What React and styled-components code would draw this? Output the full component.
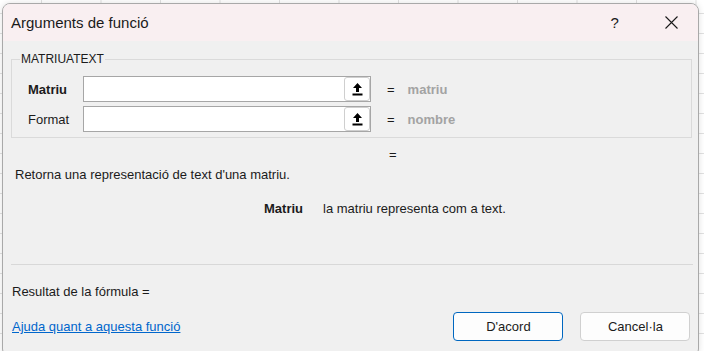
import React from "react";
import styled, { createGlobalStyle } from "styled-components";

const GlobalStyle = createGlobalStyle`
  html, body {
    margin: 0;
    width: 704px;
    height: 351px;
    overflow: hidden;
  }
  body {
    background-color: #ffffff;
    background-image:
      linear-gradient(to right, #e1e1e1 1px, transparent 1px),
      linear-gradient(to bottom, #e1e1e1 1px, transparent 1px);
    background-size: 59.5px 20px, 59.5px 20px;
    background-position: 41px 0, 0 13px;
    font-family: "Segoe UI", "Liberation Sans", Arial, sans-serif;
    color: #1b1b1b;
  }
`;

const Dialog = styled.div`
  box-sizing: border-box;
  margin: 3px 0 0 2px;
  width: 697px;
  height: 354px;
  border: 1px solid #a9a9a9;
  border-radius: 8px;
  overflow: hidden;
  background: #f0f0f0;
  display: flex;
  flex-direction: column;
  box-shadow: 0 0 6px rgba(0, 0, 0, 0.12);
`;

const TitleBar = styled.div`
  height: 37px;
  flex: none;
  display: flex;
  align-items: center;
  padding-left: 8px;
  background: #f9eff1;
`;

const Title = styled.div`
  font-size: 15px;
  color: #1a1a1a;
`;

const TitleButton = styled.div`
  width: ${(p) => p.$w}px;
  height: 37px;
  display: flex;
  align-items: center;
  justify-content: center;
  font-size: 15px;
  color: #1a1a1a;
  margin-left: ${(p) => p.$ml || 0}px;
`;

const Body = styled.div`
  flex: 1;
  display: flex;
  flex-direction: column;
  padding: 0 6px 0 8px;
`;

const GroupBox = styled.fieldset`
  box-sizing: border-box;
  width: 681px;
  margin: 11px 0 0 0;
  padding: 10px 0 5px 0;
  border: 1px solid #dadada;
  display: flex;
  flex-direction: column;
  gap: 4px;
`;

const Legend = styled.legend`
  font-size: 12px;
  line-height: 14px;
  padding: 0 1px;
  margin-left: 8px;
  color: #1b1b1b;
`;

const ArgRow = styled.div`
  display: flex;
  align-items: center;
  height: 26px;
  padding-left: 16px;
`;

const ArgLabel = styled.div`
  width: 55px;
  font-size: 13px;
  font-weight: ${(p) => (p.$bold ? 700 : 400)};
  color: #1b1b1b;
`;

const InputBox = styled.div`
  box-sizing: border-box;
  width: 288px;
  height: 26px;
  background: #ffffff;
  border: 1px solid #a6a6a6;
  display: flex;
  justify-content: flex-end;
  align-items: center;
`;

const RefButton = styled.div`
  box-sizing: border-box;
  width: 26px;
  height: 24px;
  border: 1px solid #cfcfcf;
  border-radius: 3px;
  background: #ffffff;
  display: flex;
  align-items: center;
  justify-content: center;
`;

const Equals = styled.div`
  font-size: 13px;
  margin-left: ${(p) => p.$ml}px;
  color: #1b1b1b;
`;

const ArgValue = styled.div`
  font-size: 13px;
  font-weight: 700;
  color: #a3a3a3;
  margin-left: 13px;
`;

const ResultEquals = styled.div`
  font-size: 13px;
  line-height: 16px;
  margin: 9px 0 0 378px;
`;

const Description = styled.div`
  font-size: 13px;
  line-height: 16px;
  margin: 4px 0 0 4px;
`;

const ArgHelp = styled.div`
  display: flex;
  font-size: 13px;
  line-height: 16px;
  margin: 18px 0 0 253px;
`;

const ArgHelpName = styled.div`
  font-weight: 700;
  width: 59px;
`;

const Separator = styled.div`
  height: 1px;
  width: 682px;
  background: #d8d8d8;
  margin-top: 47px;
`;

const ResultLine = styled.div`
  font-size: 13px;
  line-height: 16px;
  margin: 19px 0 0 1px;
`;

const Footer = styled.div`
  display: flex;
  align-items: center;
  margin-top: 12px;
  padding-left: 1px;
`;

const HelpLink = styled.a`
  font-size: 13px;
  color: #0066cc;
  text-decoration: underline;
  cursor: pointer;
`;

const Button = styled.button`
  box-sizing: border-box;
  width: 110px;
  height: 29px;
  margin-left: ${(p) => p.$ml}px;
  border: 1px solid ${(p) => (p.$primary ? "#0067c0" : "#d0d0d0")};
  border-radius: 4px;
  background: #fdfdfd;
  font-family: inherit;
  font-size: 13px;
  color: #1b1b1b;
  padding: 0;
`;

const UploadIcon = () => (
  <svg width="11" height="14" viewBox="0 0 11 14">
    <path d="M5.5 1 L10 6 H7 V10 H4 V6 H1 Z" fill="#000" />
    <rect x="0.5" y="11.5" width="10" height="2" fill="#000" />
  </svg>
);

const CloseIcon = () => (
  <svg width="13" height="13" viewBox="0 0 13 13">
    <path d="M0.5 0.5 L12.5 12.5 M12.5 0.5 L0.5 12.5" stroke="#1a1a1a" strokeWidth="1.1" />
  </svg>
);

const args = [
  { name: "Matriu", bold: true, value: "matriu" },
  { name: "Format", bold: false, value: "nombre" },
];

export default function App() {
  return (
    <>
      <GlobalStyle />
      <Dialog>
        <TitleBar>
          <Title>Arguments de funció</Title>
          <TitleButton $w={20} $ml={456}>?</TitleButton>
          <TitleButton $w={20} $ml={37}>
            <CloseIcon />
          </TitleButton>
        </TitleBar>
        <Body>
          <GroupBox>
            <Legend>MATRIUATEXT</Legend>
            {args.map((a) => (
              <ArgRow key={a.name}>
                <ArgLabel $bold={a.bold}>{a.name}</ArgLabel>
                <InputBox>
                  <RefButton>
                    <UploadIcon />
                  </RefButton>
                </InputBox>
                <Equals $ml={16}>=</Equals>
                <ArgValue>{a.value}</ArgValue>
              </ArgRow>
            ))}
          </GroupBox>
          <ResultEquals>=</ResultEquals>
          <Description>Retorna una representació de text d'una matriu.</Description>
          <ArgHelp>
            <ArgHelpName>Matriu</ArgHelpName>
            <div>la matriu representa com a text.</div>
          </ArgHelp>
          <Separator />
          <ResultLine>Resultat de la fórmula =</ResultLine>
          <Footer>
            <HelpLink>Ajuda quant a aquesta funció</HelpLink>
            <Button $primary $ml={273}>D'acord</Button>
            <Button $ml={17}>Cancel·la</Button>
          </Footer>
        </Body>
      </Dialog>
    </>
  );
}
